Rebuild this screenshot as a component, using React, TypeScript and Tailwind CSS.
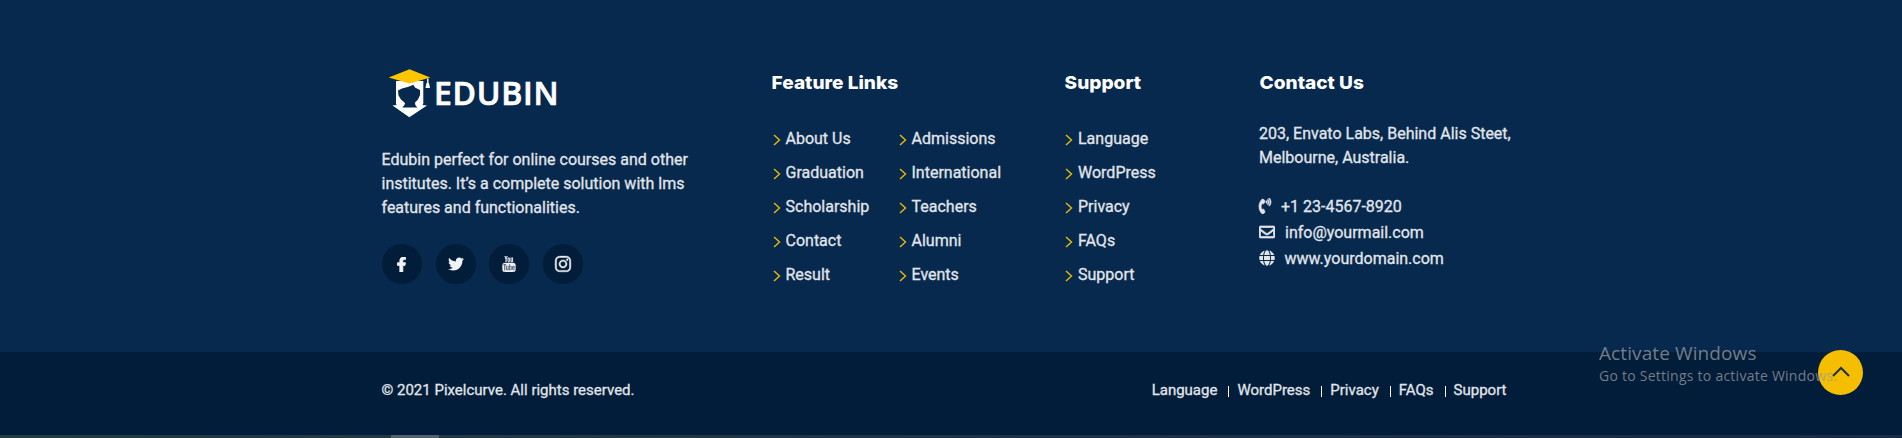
import { FaFacebookF, FaTwitter, FaInstagram, FaPhoneVolume, FaRegEnvelope, FaGlobe } from "react-icons/fa";

const features = [
  ["About Us", "Graduation", "Scholarship", "Contact", "Result"],
  ["Admissions", "International", "Teachers", "Alumni", "Events"],
];
const support = ["Language", "WordPress", "Privacy", "FAQs", "Support"];

function Logo() {
  return (
    <div className="flex h-[50px] items-start pl-[7px]">
      <svg width="44" height="50" viewBox="0 0 44 50" aria-hidden="true">
        <path fill="#fff" d="M8 12h27.300v22.500l-.8 1.500 4.500.5-17.700 11.700L4.500 36.500l4-.5-.5-1.500z" />
        <path fill="#07294d" d="M10 21.500l4-2 6.500-1.700 4.800-2 1.700 2.700 5 2.500v5l-2 4.500-3 3 .3 2.500 2 2.500H14.200l2.300-2.500.5-2-4-3.500-2.500-4z" />
        <path fill="#ffc600" d="M.7 8.500L21.500.3 42.300 8.500 21.500 14.500z" />
        <path stroke="#fff" strokeWidth="1.400" d="M39.800 9.500v6" />
        <path fill="#fff" d="M38.500 14h2.500l1 5h-4.500z" />
      </svg>
      <span className="mt-[7px] ml-[2px] font-['Open_Sans'] text-[32px] leading-[34px] font-semibold tracking-[0.7px] text-white [-webkit-text-stroke:0.7px]">EDUBIN</span>
    </div>
  );
}

function YouTubeIcon() {
  return (
    <svg width="16" height="16" viewBox="0 0 1792 1792" fill="currentColor" stroke="currentColor" strokeWidth="24" aria-hidden="true">
      <path d="M1099 1244v211q0 67-39 67-23 0-45-22v-301q22-22 45-22 39 0 39 67zm338 1v46h-90v-46q0-68 45-68t45 68zm-966-218h107v-94h-312v94h105v569h100v-569zm288 569h89v-494h-89v378q-30 42-57 42-18 0-21-21-1-3-1-35v-364h-89v391q0 49 8 73 12 37 58 37 48 0 102-61v54zm429-148v-197q0-73-9-99-17-56-71-56-50 0-93 54v-217h-89v663h89v-48q45 55 93 55 54 0 71-55 9-27 9-100zm338-10v-13h-91q0 51-2 61-7 36-40 36-46 0-46-69v-87h179v-103q0-79-27-116-39-51-106-51-68 0-107 51-28 37-28 116v173q0 79 29 116 39 51 108 51 72 0 108-53 18-27 21-54 2-9 2-58zm-608-913v-210q0-69-43-69t-43 69v210q0 70 43 70t43-70zm719 751q0 234-26 350-14 59-58 99t-102 46q-184 21-555 21t-555-21q-58-6-102.500-46t-57.500-99q-26-112-26-350 0-234 26-350 14-59 58-99t103-47q183-20 554-20t555 20q58 7 102.500 47t57.500 99q26 112 26 350zm-998-1276h102l-121 399v271h-100v-271q-14-74-61-212-37-103-65-187h106l71 263zm370 333v175q0 81-28 118-38 51-106 51-67 0-105-51-28-38-28-118v-175q0-80 28-117 38-51 105-51 68 0 106 51 28 37 28 117zm335-162v499h-91v-55q-53 62-103 62-46 0-59-37-8-24-8-75v-394h91v367q0 33 1 35 3 22 21 22 27 0 57-43v-381h91z" />
    </svg>
  );
}

function Heading({ children }: { children: string }) {
  return (
    <h3 className="w-fit origin-left scale-x-[1.06] pl-[0.500px] font-[Inter] text-[18px] leading-[22px] font-extrabold whitespace-nowrap text-white [-webkit-text-stroke:0px]">{children}</h3>
  );
}

function LinkList({ items }: { items: string[] }) {
  return (
    <ul className="flex flex-col gap-[10px]">
      {items.map((item) => (
        <li key={item} className="flex h-6 items-center gap-[5px]">
          <svg width="8" height="12" viewBox="0 0 8 12" fill="none" stroke="#e9b90a" strokeWidth="1.400" className="-ml-[0.500px] mt-px">
            <path d="M1 1l5.500 5L1 11" />
          </svg>
          <a href="#">{item}</a>
        </li>
      ))}
    </ul>
  );
}

export default function App() {
  return (
    <footer className="relative flex h-[438px] w-full flex-col overflow-hidden bg-[#07294d] font-[Roboto] text-[16px] leading-6 text-[#e1e5ea]">
      <div className="mx-auto flex h-[352px] w-[1140px] shrink-0 pt-[69px] [-webkit-text-stroke:0.3px]">
        <section className="w-[390px] shrink-0">
          <Logo />
          <p className="mt-[29px] w-[330px] pl-[0.500px] whitespace-nowrap">
            Edubin perfect for online courses and other<br />
            institutes. It’s a complete solution with lms<br />
            features and functionalities.
          </p>
          <div className="mt-6 flex gap-[13.700px] pl-px text-[#f0f2f5]">
            {[<FaFacebookF size={15} strokeWidth={30} stroke="currentColor" className="mr-px" />, <FaTwitter size={16} />, <YouTubeIcon />, <FaInstagram size={18} strokeWidth={12} stroke="currentColor" />].map((icon, i) => (
              <a key={i} href="#" className="flex size-10 items-center justify-center rounded-full bg-[#021d3a]">{icon}</a>
            ))}
          </div>
        </section>

        <section className="w-[293px] shrink-0 pt-[3px]">
          <Heading>Feature Links</Heading>
          <div className="mt-[33px] flex pl-[2px]">
            <div className="w-[126px]"><LinkList items={features[0]} /></div>
            <LinkList items={features[1]} />
          </div>
        </section>

        <section className="w-[195px] shrink-0 pt-[3px]">
          <Heading>Support</Heading>
          <div className="mt-[33px] pl-[1.500px]"><LinkList items={support} /></div>
        </section>

        <section className="pt-[3px] whitespace-nowrap">
          <Heading>Contact Us</Heading>
          <p className="mt-[28px]">203, Envato Labs, Behind Alis Steet,<br />Melbourne, Australia.</p>
          <div className="mt-6 flex flex-col gap-[2px]">
            <div className="flex h-6 items-center"><FaPhoneVolume size={16} className="-ml-[2px]" stroke="currentColor" strokeWidth={22} /><span className="mt-px ml-[8px]">+1 23-4567-8920</span></div>
            <div className="flex h-6 items-center"><FaRegEnvelope size={16} stroke="currentColor" strokeWidth={22} /><span className="mt-px ml-[10px]">info@yourmail.com</span></div>
            <div className="flex h-6 items-center"><FaGlobe size={16} /><span className="mt-px ml-[9.500px]">www.yourdomain.com</span></div>
          </div>
        </section>
      </div>

      <div className="h-[83px] shrink-0 bg-[#021d3a] text-[15px] [-webkit-text-stroke:0.3px]">
        <div className="mx-auto flex w-[1140px] justify-between pt-[26px] whitespace-nowrap">
          <p className="pl-[0.500px]">© 2021 Pixelcurve. All rights reserved.</p>
          <nav className="flex pr-[14.500px]">
            {support.map((item, i) => (
              <div key={item} className="flex items-center">
                {i > 0 && <span className="mt-[3px] mr-[8px] ml-[11px] h-[11px] w-px bg-white" />}
                <a href="#">{item}</a>
              </div>
            ))}
          </nav>
        </div>
      </div>

      <div className="h-[3px] shrink-0 bg-linear-to-r from-[#253b43] to-[#1b2b43] pl-[391px]">
        <div className="h-full w-12 bg-[#52616d]" />
      </div>

      <a href="#" aria-label="Back to top" className="absolute top-[350px] left-[1818px] flex size-[45px] items-center justify-center rounded-full bg-[#f5be00]">
        <svg width="18" height="12" viewBox="0 0 18 12" fill="none" stroke="#1c3347" strokeWidth="2" className="-mt-px">
          <path d="M1 10l8-8 8 8" />
        </svg>
      </a>
      <div className="pointer-events-none absolute top-[341px] left-[1599px] font-['Open_Sans'] whitespace-nowrap text-[#9a9da2]/75">
        <p className="text-[19px] leading-6 tracking-[0.1px]">Activate Windows</p>
        <p className="mt-px text-[14px] leading-5 tracking-[0.25px]">Go to Settings to activate Windows.</p>
      </div>
    </footer>
  );
}
